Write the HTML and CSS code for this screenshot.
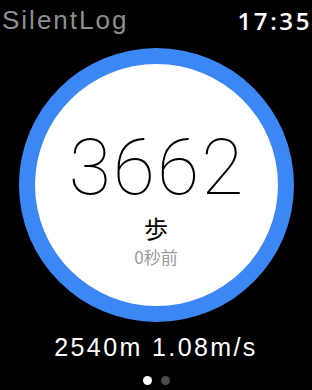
FILE: index.html
```html
<!DOCTYPE html>
<html lang="ja">
<head>
    <meta charset="UTF-8">
    <meta name="viewport" content="width=device-width, initial-scale=1.0">
    <title>SilentLog</title>
    <link rel="stylesheet" href="styles.css">
</head>
<body>

    <header class="top-bar">
        <span class="app-name">SilentLog</span>
        <span class="clock">17:35</span>
    </header>

    <div class="ring">
        <div class="steps">3662</div>
        <div class="unit">歩</div>
        <div class="ago">0秒前</div>
    </div>

    <p class="stats">2540m 1.08m/s</p>

    <div class="pager">
        <span class="dot active"></span>
        <span class="dot"></span>
    </div>

</body>
</html>
```

FILE: styles.css
```css
body {
    font-family: "Liberation Sans", Arial, sans-serif;
    background-color: #000;
    color: #fff;
    margin: 0;
    padding: 0;
    width: 312px;
    height: 390px;
    overflow: hidden;
}
.top-bar {
    display: flex;
    justify-content: space-between;
    align-items: center;
    height: 40px;
    padding: 0 3px 0 2px;
}
.app-name {
    color: #8e8e8e;
    font-size: 26px;
    letter-spacing: 2px;
}
.clock {
    font-family: "Open Sans", sans-serif;
    font-size: 24px;
    font-weight: 600;
    letter-spacing: 2.6px;
    margin-right: -3px;
}
.ring {
    box-sizing: border-box;
    width: 275px;
    height: 274px;
    margin: 8px auto 0;
    border: 16px solid #3b88f5;
    border-radius: 50%;
    background-color: #fff;
    display: flex;
    flex-direction: column;
    align-items: center;
    padding-top: 72px;
}
.steps {
    font-family: Roboto, Lato, sans-serif;
    font-weight: 100;
    font-size: 77px;
    line-height: 64px;
    color: #000;
    letter-spacing: 2px;
    margin-right: -2px;
}
.unit {
    font-family: "Noto Sans CJK JP", sans-serif;
    font-size: 24px;
    line-height: 30px;
    color: #000;
    margin-top: 13px;
}
.ago {
    font-family: "Noto Sans CJK JP", sans-serif;
    font-size: 17px;
    line-height: 22px;
    color: #9a9a9a;
    margin-top: 3px;
}
.stats {
    margin: 10px 0 0;
    text-align: center;
    font-size: 25px;
    line-height: 30px;
    letter-spacing: 2.4px;
}
.pager {
    display: flex;
    justify-content: center;
    gap: 9px;
    margin-top: 14px;
}
.dot {
    width: 9px;
    height: 9px;
    border-radius: 50%;
    background-color: #4a4a4a;
}
.dot.active {
    background-color: #fff;
}
```
